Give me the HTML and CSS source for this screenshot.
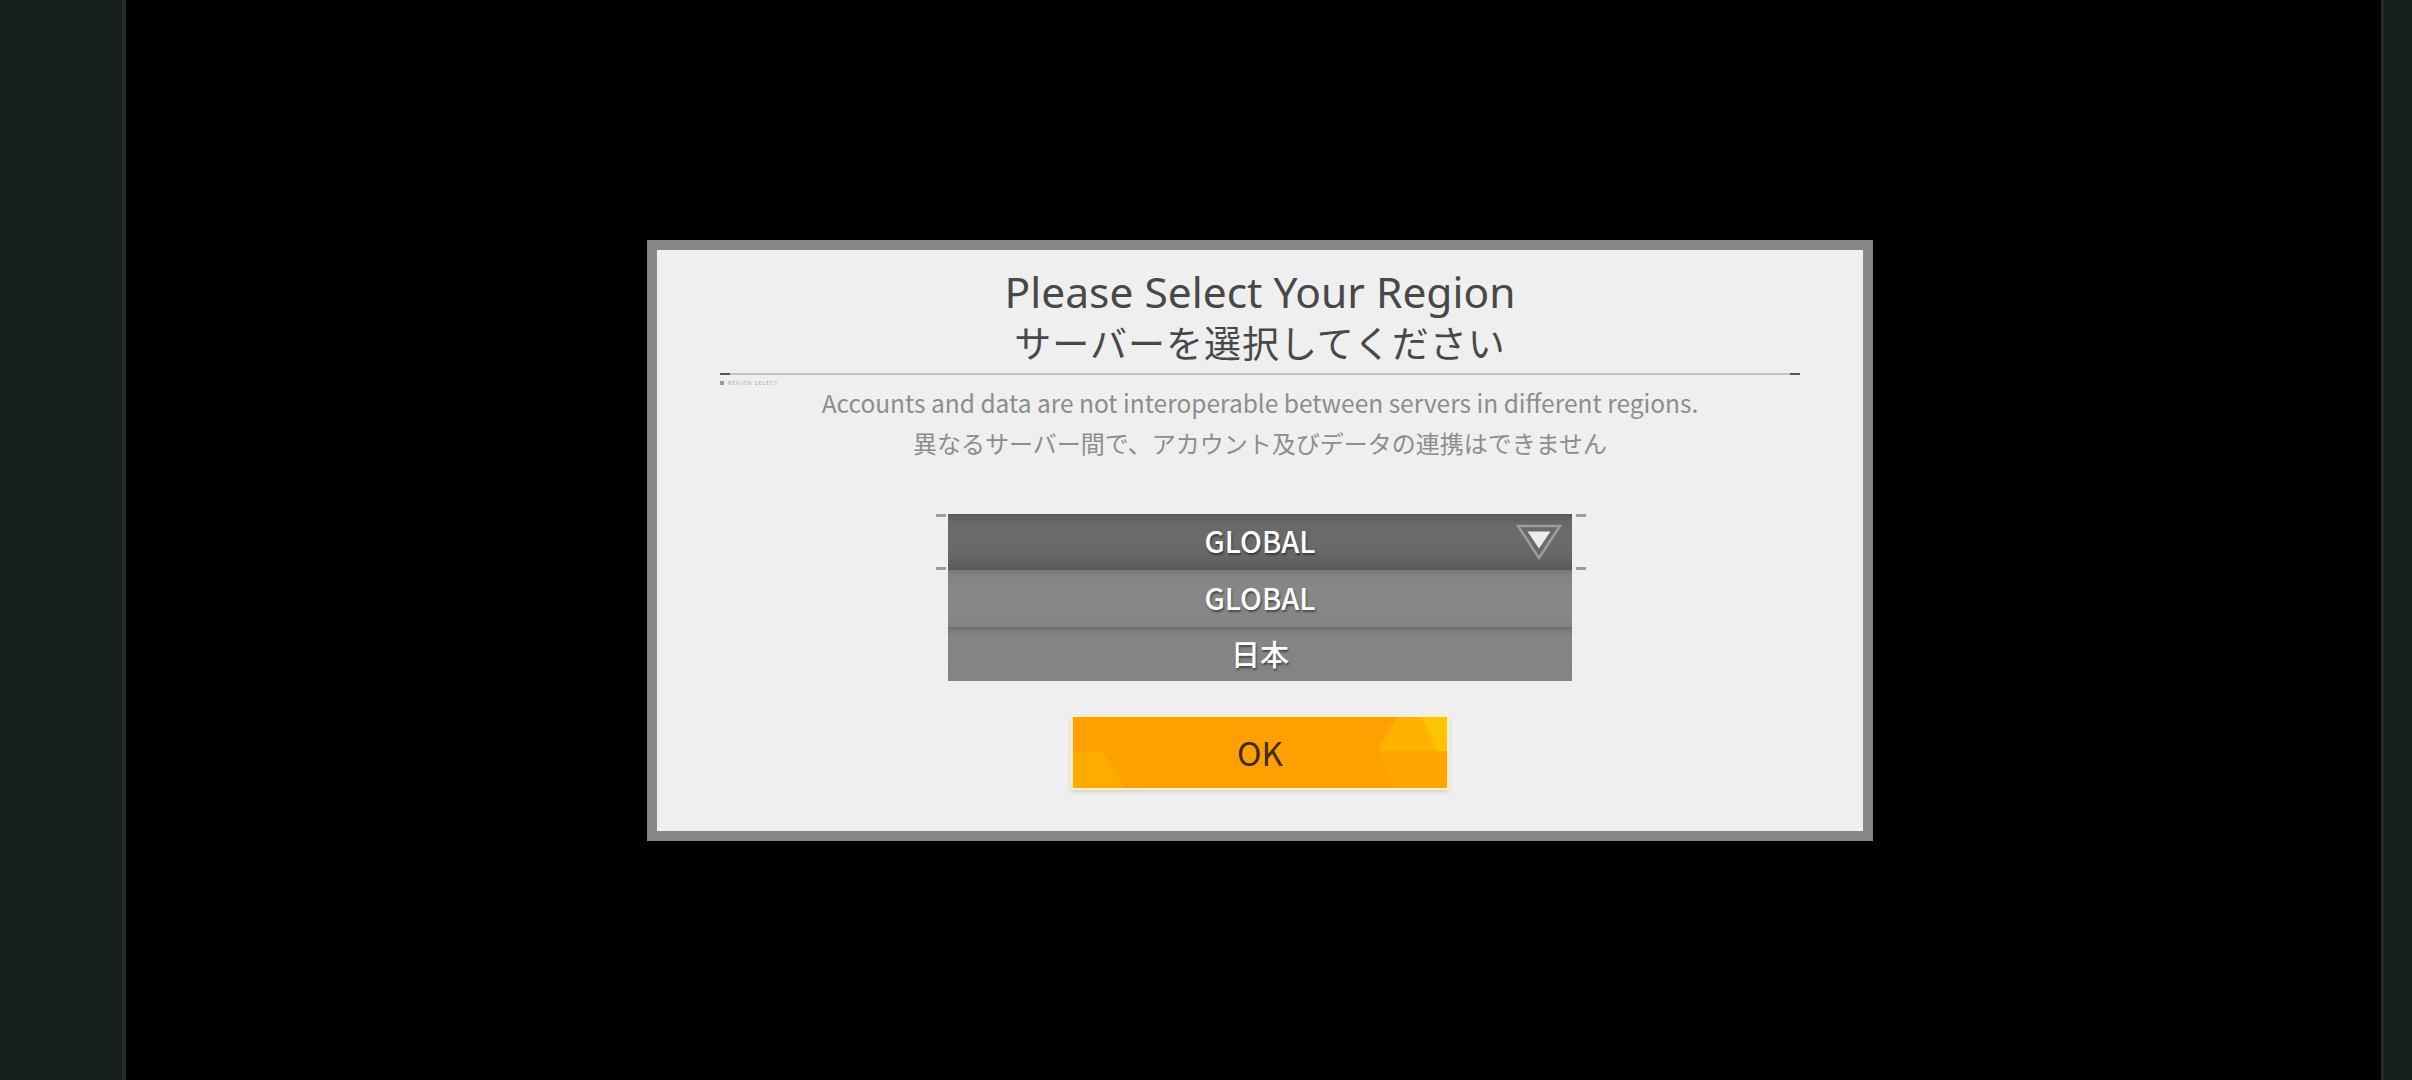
FILE: index.html
```html
<!DOCTYPE html>
<html lang="ja">
<head>
<meta charset="utf-8">
<title>Please Select Your Region</title>
<link rel="stylesheet" href="styles.css">
</head>
<body>
<div class="side side-left"></div>
<main class="stage">
  <section class="dialog">
    <h1 class="title">
      <span class="title-en">Please Select Your Region</span>
      <span class="title-ja">サーバーを選択してください</span>
    </h1>
    <div class="rule">
      <span class="rule-label"><i class="rule-dot"></i>REGION SELECT</span>
    </div>
    <p class="note">
      <span class="note-en">Accounts and data are not interoperable between servers in different regions.</span>
      <span class="note-ja">異なるサーバー間で、アカウント及びデータの連携はできません</span>
    </p>
    <div class="select">
      <div class="select-head">
        <span class="select-value">GLOBAL</span>
        <svg class="select-arrow" viewBox="0 0 46 36" width="46" height="36" aria-hidden="true">
          <polygon points="2,2 44,2 23,34" fill="none" stroke="#9d9d9d" stroke-width="2.5" stroke-linejoin="miter"/>
          <polygon points="11.5,7.5 34.5,7.5 23,24.5" fill="#ececec"/>
        </svg>
      </div>
      <div class="select-option">GLOBAL</div>
      <div class="select-option select-option-last">日本</div>
    </div>
    <button class="ok" type="button">
      <svg class="ok-bg" viewBox="0 0 378 75" width="378" height="75" preserveAspectRatio="none" aria-hidden="true">
        <rect width="378" height="75" fill="#ffa000"/>
        <polygon points="0,37 30,37 53,75 0,75" fill="#ffab00"/>
        <polygon points="327,0 352,0 368,36 308,36" fill="#ffb200"/>
        <polygon points="352,0 378,0 378,36 368,36" fill="#ffc400"/>
        <polygon points="308,36 378,36 378,75 325,75" fill="#ffa600"/>
      </svg>
      <span class="ok-label">OK</span>
    </button>
  </section>
</main>
<div class="side side-right"></div>
</body>
</html>
```

FILE: styles.css
```css
html, body {
  margin: 0;
  padding: 0;
}

body {
  width: 2412px;
  height: 1080px;
  background: #000;
  display: flex;
  overflow: hidden;
  font-family: "Noto Sans CJK JP", "Noto Sans", sans-serif;
}

.side {
  background: #171e1e;
  flex: none;
}

.side-left {
  width: 122px;
  border-right: 4px solid #232a2a;
}

.side-right {
  width: 28px;
  border-left: 3px solid #232a2a;
}

.stage {
  flex: 1;
  display: flex;
  align-items: center;
  justify-content: center;
  padding-left: 13px;
}

.dialog {
  width: 1226px;
  height: 601px;
  box-sizing: border-box;
  border: 10px solid #878787;
  background: #efefef;
  display: flex;
  flex-direction: column;
  align-items: center;
  padding-top: 22px;
}

.title {
  margin: 0;
  display: flex;
  flex-direction: column;
  align-items: center;
  color: #484848;
  font-weight: 400;
}

.title-en {
  font-family: "Noto Sans", "Noto Sans CJK JP", sans-serif;
  font-size: 42.5px;
  line-height: 40px;
  font-weight: 400;
}

.title-ja {
  font-size: 37px;
  line-height: 40px;
  margin-top: 10px;
  letter-spacing: 1px;
  font-weight: 400;
}

.rule {
  position: relative;
  width: 1080px;
  height: 2px;
  margin-top: 11px;
  background: #c3c3c3;
}

.rule::before {
  content: "";
  position: absolute;
  left: 0;
  top: 0;
  width: 10px;
  height: 2px;
  background: #555;
}

.rule::after {
  content: "";
  position: absolute;
  right: 0;
  top: 0;
  width: 10px;
  height: 2px;
  background: #555;
}

.rule-label {
  position: absolute;
  left: 0;
  top: 7px;
  font-size: 5px;
  line-height: 6px;
  color: #a8a8a8;
  letter-spacing: 1px;
  display: flex;
  align-items: center;
  gap: 4px;
  white-space: nowrap;
}

.rule-dot {
  width: 4px;
  height: 4px;
  background: #9a9a9a;
}

.note {
  margin: 8px 0 0;
  display: flex;
  flex-direction: column;
  align-items: center;
  color: #8d8d8d;
  font-size: 24px;
  line-height: 40px;
}

.note-en {
  font-size: 24.5px;
}

.select {
  width: 624px;
  margin-top: 51px;
  display: flex;
  flex-direction: column;
}

.select-head {
  position: relative;
  height: 56px;
  box-sizing: border-box;
  padding-bottom: 4px;
  display: flex;
  align-items: center;
  justify-content: center;
  background: linear-gradient(#555 0, #5f5f5f 3px, #696969 10px, #6b6b6b 28px, #656565 44px, #5c5c5c 52px, #5a5a5a 56px);
}

.select-head::before,
.select-head::after {
  content: "";
  position: absolute;
  top: 0;
  width: 10px;
  height: 3px;
  background: #9b9b9b;
  box-shadow: 0 53px 0 #9b9b9b;
}

.select-head::before {
  left: -12px;
}

.select-head::after {
  right: -14px;
}

.select-value,
.select-option {
  color: #fff;
  font-size: 29px;
  font-weight: 500;
  text-shadow: 1px 2px 2px rgba(0, 0, 0, 0.45);
}

.select-arrow {
  position: absolute;
  right: 10px;
  top: 10px;
}

.select-option {
  height: 57px;
  box-sizing: border-box;
  padding-bottom: 2px;
  display: flex;
  align-items: center;
  justify-content: center;
  background: linear-gradient(#777 0, #838383 5px, #878787 20px, #858585 57px);
}

.select-option-last {
  height: 54px;
  background: linear-gradient(#6c6c6c 0, #7c7c7c 4px, #858585 12px, #838383 54px);
}

.ok {
  position: relative;
  width: 378px;
  height: 75px;
  margin-top: 34px;
  padding: 0;
  box-sizing: border-box;
  border: 2px solid #fff0c8;
  background: #ffa000;
  box-shadow: 0 2px 4px rgba(0, 0, 0, 0.12);
  display: flex;
  align-items: center;
  justify-content: center;
  overflow: hidden;
  font-family: "Noto Sans CJK JP", "Noto Sans", sans-serif;
  cursor: pointer;
}

.ok-bg {
  position: absolute;
  left: 0;
  top: 0;
  width: 100%;
  height: 100%;
}

.ok-label {
  position: relative;
  color: #3d2c14;
  font-size: 33px;
  line-height: 1;
}
```
